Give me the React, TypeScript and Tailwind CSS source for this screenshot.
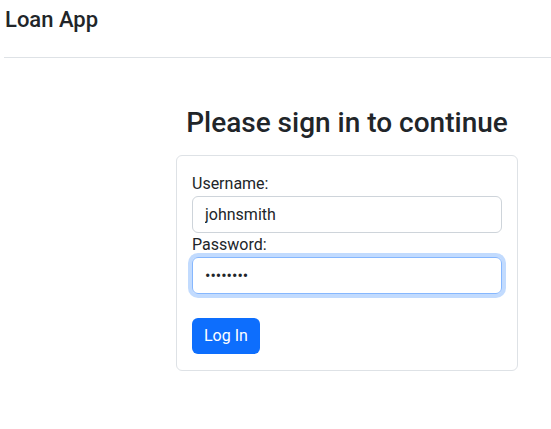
import { useState } from 'react';

export default function App() {
    const [username, setUsername] = useState('johnsmith');
    const [password, setPassword] = useState('password');

    return (
        <div className="min-h-[429px] bg-white text-[#212529] font-['Roboto','Liberation_Sans',sans-serif]">
            <header className="pt-[7px] pl-[5px]">
                <h4 className="text-[22px] leading-[26px] font-medium">Loan App</h4>
            </header>
            <hr className="mt-[24px] ml-[4px] border-t border-[#dee2e6]" />

            <main className="ml-[176px] w-[342px] pt-[48px]">
                <h2 className="text-center text-[28px] leading-[34px] font-medium">Please sign in to continue</h2>

                <div className="mt-[15px] border border-[#dee2e6] rounded-md px-[15px] pt-4 pb-4">
                    <form onSubmit={e => e.preventDefault()} className="flex flex-col">
                        <label htmlFor="username" className="text-base leading-6">Username:</label>
                        <input
                            id="username"
                            type="text"
                            value={username}
                            onChange={e => setUsername(e.target.value)}
                            className="h-[37px] px-3 text-base border border-[#ced4da] rounded-md outline-none text-[#212529]"
                        />
                        <label htmlFor="password" className="text-base leading-6">Password:</label>
                        <input
                            id="password"
                            type="password"
                            value={password}
                            onChange={e => setPassword(e.target.value)}
                            className="h-[37px] px-3 text-base border border-[#86b7fe] rounded-md outline-none shadow-[0_0_0_4px_rgba(13,110,253,0.25)] text-[#212529]"
                        />
                        <div className="mt-6">
                            <button type="submit" className="h-9 px-3 text-base leading-6 text-white bg-[#0d6efd] rounded-md">
                                Log In
                            </button>
                        </div>
                    </form>
                </div>
            </main>
        </div>
    );
}
